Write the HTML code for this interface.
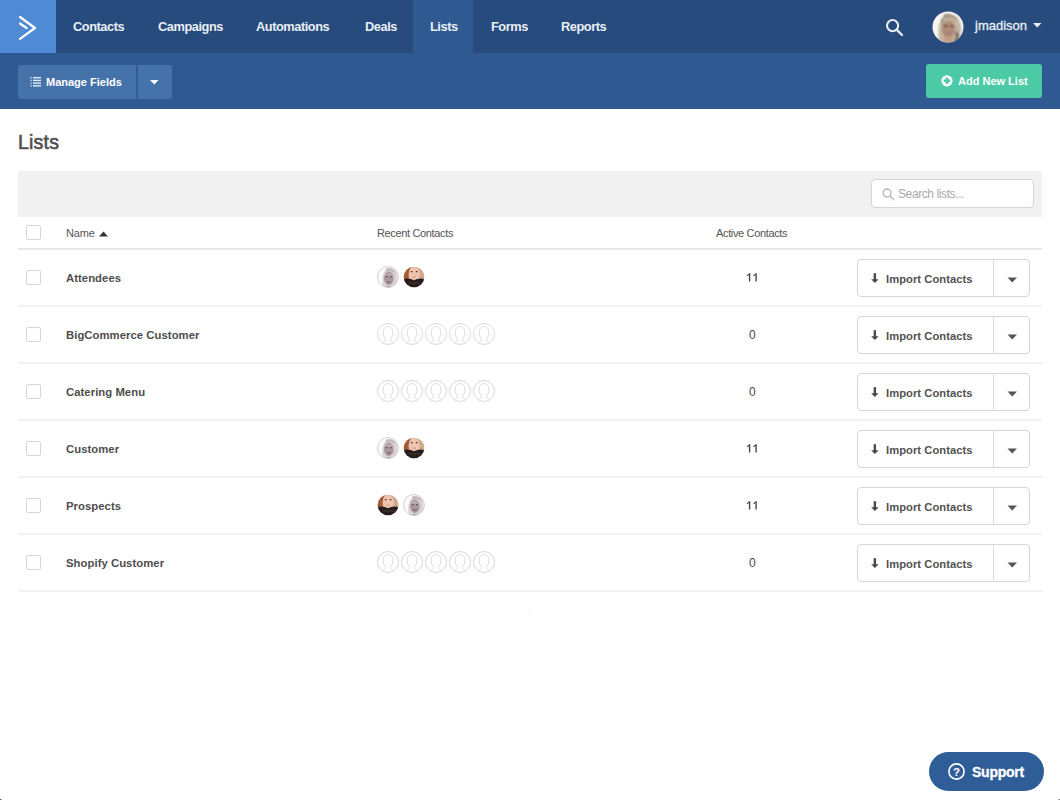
<!DOCTYPE html>
<html><head><meta charset="utf-8">
<style>
*{box-sizing:border-box;margin:0;padding:0}
html,body{width:1060px;height:800px;overflow:hidden;background:#fff;font-family:"Liberation Sans",sans-serif}
.abs{position:absolute}
#nav{position:absolute;left:0;top:0;width:1060px;height:53px;background:#264b7c}
#logo{position:absolute;left:0;top:0;width:56px;height:53px;background:#4f8bd5}
.ni{position:absolute;top:0;height:53px;line-height:54px;color:#e9eef5;font-weight:bold;font-size:12.8px;letter-spacing:-0.45px;white-space:nowrap}
#tab{position:absolute;left:413px;top:0;width:60px;height:53px;background:#2f5a91}
#sub{position:absolute;left:0;top:53px;width:1060px;height:56px;background:#2f5a91}
#mf{position:absolute;left:18px;top:65px;width:154px;height:34px;background:#4672aa;border-radius:3px}
#mfdiv{position:absolute;left:118px;top:0;width:2px;height:34px;background:#345f96}
#add{position:absolute;left:926px;top:64px;width:116px;height:34px;background:#4cc9a5;border-radius:3px}
.btxt{position:absolute;color:#fff;font-weight:bold;font-size:11px;white-space:nowrap}
#title{position:absolute;left:18px;top:131px;font-size:19.5px;color:#505050;-webkit-text-stroke:0.6px #505050;letter-spacing:0.2px}
#gbar{position:absolute;left:18px;top:171px;width:1024px;height:46px;background:#f1f1f1;border-radius:2px 2px 0 0}
#search{position:absolute;left:871px;top:179px;width:163px;height:29px;background:#fff;border:1px solid #d4d4d4;border-radius:4px}
.hdr{position:absolute;top:227px;font-size:11px;color:#555;white-space:nowrap;letter-spacing:-0.35px}
.line{position:absolute;left:18px;width:1024px;height:2px;background:#f2f2f2}
.cb{position:absolute;left:26px;width:15px;height:15px;border:1px solid #d6d6d6;border-radius:2px;background:#fff}
.nm{position:absolute;left:66px;font-size:11.3px;font-weight:bold;color:#4e4e4e;letter-spacing:0.05px;white-space:nowrap}
.num{position:absolute;left:702px;width:100px;text-align:center;font-size:12px;color:#474747;letter-spacing:-0.7px}
.imp{position:absolute;left:857px;width:173px;height:38px;border:1px solid #d6d6d6;border-radius:4px;background:#fff}
.imp .dv{position:absolute;left:135px;top:0;width:1px;height:36px;background:#dcdcdc}
.imp .t{position:absolute;left:28px;top:13px;font-size:11.2px;font-weight:bold;color:#525252;letter-spacing:0.05px;white-space:nowrap}
.imp svg{position:absolute}
.av{position:absolute;width:22px;height:22px;border-radius:50%}
#sup{position:absolute;left:929px;top:752px;width:115px;height:39px;border-radius:20px;background:#2f5d98}
</style></head><body>
<div id="nav">
  <div id="logo">
    <svg width="56" height="53" style="position:absolute;left:0;top:0">
      <path d="M20 17 L35 28 L20 38.8" fill="none" stroke="#fff" stroke-width="2.2" stroke-linecap="round" stroke-linejoin="round"/>
      <path d="M20 23.5 L26.6 28" fill="none" stroke="#fff" stroke-width="2.2" stroke-linecap="round"/>
    </svg>
  </div>
  <div id="tab"></div>
  <div class="ni" style="left:73px">Contacts</div>
  <div class="ni" style="left:158px">Campaigns</div>
  <div class="ni" style="left:256px">Automations</div>
  <div class="ni" style="left:365px">Deals</div>
  <div class="ni" style="left:430px">Lists</div>
  <div class="ni" style="left:491px">Forms</div>
  <div class="ni" style="left:561px">Reports</div>
  <svg class="abs" style="left:884px;top:17px" width="22" height="22">
    <circle cx="8.6" cy="8.6" r="5.6" fill="none" stroke="#e9eef5" stroke-width="2.1"/>
    <path d="M12.6 12.6 L18 18" stroke="#e9eef5" stroke-width="2.3" stroke-linecap="round"/>
  </svg>
  <svg class="abs" style="left:932px;top:11px" width="32" height="32" viewBox="0 0 32 32">
    <defs><clipPath id="uc"><circle cx="16" cy="16" r="15.5"/></clipPath><filter id="bl" x="-20%" y="-20%" width="140%" height="140%"><feGaussianBlur stdDeviation="0.8"/></filter></defs>
    <g clip-path="url(#uc)"><rect width="32" height="32" fill="#f8f6f3"/>
    <g filter="url(#bl)">
    <path d="M8 32 C5 22 6 8 15 4 C24 2 30 10 29 20 C29 26 27 30 25 32 Z" fill="#c4b6a2"/>
    <path d="M12 3.5 C18 2 24 5 27 10 C23 6 17 5 12 6 Z" fill="#8f806e"/>
    <path d="M9 12 C9 7 12 5 14 5 C11 7 10 10 10 14 Z" fill="#6f5f50"/>
    <ellipse cx="16.5" cy="18" rx="6.8" ry="8.8" fill="#b48c76"/>
    <path d="M11 9 C14 7 20 7 24 11 C20 9 14 9 11 11 Z" fill="#bdae98"/>
    <rect x="12" y="14.2" width="3.2" height="1.8" fill="#33241f"/><rect x="18" y="14.2" width="3.2" height="1.8" fill="#33241f"/>
    <path d="M12.5 20.5 C14.5 23.5 18.5 23.5 20.5 20.5 Z" fill="#4a2824"/>
    <path d="M13.5 20.8 C15 21.8 18 21.8 19.5 20.8" stroke="#efe6e0" stroke-width="0.9" fill="none"/>
    <path d="M24.5 21 C26 25 25 29 22.5 32" stroke="#4a3a2e" stroke-width="2.2" fill="none"/>
    <rect x="12" y="26" width="9" height="6" fill="#c39d86"/>
    </g></g>
  </svg>
  <div class="abs" style="left:975px;top:0;height:53px;line-height:51px;font-size:13px;color:#e9eef5;-webkit-text-stroke:0.3px #e9eef5;white-space:nowrap">jmadison</div>
  <svg class="abs" style="left:1033px;top:23px" width="9" height="5"><path d="M0 0 L8.5 0 L4.25 4.5 Z" fill="#e9eef5"/></svg>
</div>
<div id="sub">
</div>
<div id="mf">
  <svg class="abs" style="left:12px;top:12px" width="12" height="10">
    <g fill="#e3eaf3"><rect x="0.5" y="0" width="1.2" height="1.3"/><rect x="3" y="0" width="8" height="1.4"/>
    <rect x="0.5" y="2.7" width="1.2" height="1.3"/><rect x="3" y="2.7" width="8" height="1.4"/>
    <rect x="0.5" y="5.4" width="1.2" height="1.3"/><rect x="3" y="5.4" width="8" height="1.4"/>
    <rect x="0.5" y="8.1" width="1.2" height="1.3"/><rect x="3" y="8.1" width="8" height="1.4"/></g>
  </svg>
  <div class="btxt" style="left:28px;top:11px">Manage Fields</div>
  <div id="mfdiv"></div>
  <svg class="abs" style="left:132px;top:15px" width="9" height="5"><path d="M0 0 L8.5 0 L4.25 4.5 Z" fill="#fff"/></svg>
</div>
<div id="add">
  <svg class="abs" style="left:15px;top:11px" width="13" height="13">
    <circle cx="6" cy="5.8" r="5.6" fill="#fff"/>
    <path d="M6 2.6 V9 M2.8 5.8 H9.2" stroke="#4cc8a4" stroke-width="2.5"/>
  </svg>
  <div class="btxt" style="left:32px;top:11px">Add New List</div>
</div>

<div id="title">Lists</div>
<div id="gbar"></div>
<div id="search">
  <svg class="abs" style="left:10px;top:8px" width="13" height="13">
    <circle cx="5" cy="5" r="4" fill="none" stroke="#b5b5b5" stroke-width="1.3"/>
    <path d="M8 8 L11.5 11.5" stroke="#b5b5b5" stroke-width="1.4" stroke-linecap="round"/>
  </svg>
  <div class="abs" style="left:26px;top:7px;font-size:12px;color:#a9a9a9;letter-spacing:-0.4px;white-space:nowrap">Search lists...</div>
</div>

<div class="cb" style="top:225px"></div>
<div class="hdr" style="left:66px;letter-spacing:-0.15px">Name</div>
<svg class="abs" style="left:99px;top:231px" width="10" height="6"><path d="M0 5.5 L9 5.5 L4.5 0.5 Z" fill="#333"/></svg>
<div class="hdr" style="left:377px">Recent Contacts</div>
<div class="hdr" style="left:716px">Active Contacts</div>
<div class="line" style="top:248px;height:2px;background:#e7e7e7"></div>

<!--ROWS-->
<svg width="0" height="0" style="position:absolute"><filter id="sb" x="-20%" y="-20%" width="140%" height="140%"><feGaussianBlur stdDeviation="0.55"/></filter></svg>
<div class="cb" style="top:270px"></div>
<div class="nm" style="top:272px">Attendees</div>
<svg class="abs" style="left:377px;top:266px" width="22" height="22" viewBox="0 0 22 22"><defs><clipPath id="ca0"><circle cx="11" cy="11" r="10.5"/></clipPath></defs><g clip-path="url(#ca0)"><rect width="22" height="22" fill="#fafafa"/><g filter="url(#sb)"><path d="M6 22 C4.5 14 5 5 11 2.5 C17 1.5 20.5 6 20.5 12 C20.5 17 19.5 20 18 22 Z" fill="#d8d2d0"/><path d="M9 2.8 C13 1.5 18 3 19.5 8 C16 5 12 4.5 9 5.5 Z" fill="#c4bcbc"/><ellipse cx="11.8" cy="12.2" rx="4.8" ry="6.8" fill="#a8969a"/><ellipse cx="12" cy="9" rx="3.6" ry="2.2" fill="#b9a9aa"/><rect x="9" y="10" width="1.8" height="1.2" fill="#5a4a66"/><rect x="12.8" y="10" width="1.8" height="1.2" fill="#5a4a66"/><path d="M10 15.5 C11.2 16.4 12.6 16.4 13.8 15.5" stroke="#6e5a6a" stroke-width="1" fill="none"/><path d="M8 22 C9 19.5 15 19.5 16 22Z" fill="#8f7f86"/></g></g><circle cx="11" cy="11" r="10.5" fill="none" stroke="#d3d3d3" stroke-width="1"/></svg>
<svg class="abs" style="left:403px;top:266px" width="22" height="22" viewBox="0 0 22 22"><defs><clipPath id="cb0"><circle cx="11" cy="11" r="10.3"/></clipPath></defs><g clip-path="url(#cb0)"><rect width="22" height="22" fill="#d6b49a"/><g filter="url(#sb)"><path d="M0 0 H9 C6 3 5 8 6 14 L0 16 Z" fill="#a55a36"/><path d="M22 0 H14 C17 3 18 8 17 14 L22 16 Z" fill="#d0aa88"/><ellipse cx="11.2" cy="7.8" rx="5.4" ry="6.6" fill="#efc5b1"/><rect x="7.8" y="5" width="1.8" height="1.3" fill="#5e3f3c"/><rect x="12.8" y="5" width="1.8" height="1.3" fill="#5e3f3c"/><path d="M9.5 10.8 C10.5 11.4 12 11.4 13 10.8" stroke="#c48a80" stroke-width="0.9" fill="none"/><path d="M0 22 V13.5 C3.5 11.5 7 12.5 11 14.2 C15 12.5 18.5 11.5 22 13.5 V22 Z" fill="#261e1c"/><path d="M6 17 C8 16 10 18 12 17 C14 16 16 18 18 17" stroke="#4a3a34" stroke-width="1" fill="none"/></g></g></svg>
<svg class="abs" style="left:746px;top:272px" width="12" height="11"><path d="M3.6 1.7 V9.6 M10.1 1.7 V9.6" stroke="#454545" stroke-width="1.35"/><path d="M1 3.9 L3.9 1.4 M7.5 3.9 L10.4 1.4" stroke="#454545" stroke-width="1.2"/></svg>
<div class="imp" style="top:259px"><svg style="left:12px;top:13px" width="10" height="11"><path d="M4.85 0.2 V7" stroke="#484848" stroke-width="2.4"/><path d="M1.1 6.2 L8.6 6.2 L4.85 10.1 Z" fill="#484848"/></svg><div class="t">Import Contacts</div><div class="dv"></div><svg style="left:149px;top:17px" width="11" height="6"><path d="M0.5 0.5 L10 0.5 L5.25 5.5 Z" fill="#555"/></svg></div>
<div class="line" style="top:305px"></div>
<div class="cb" style="top:327px"></div>
<div class="nm" style="top:329px">BigCommerce Customer</div>
<svg class="abs" style="left:377px;top:323px" width="22" height="22"><circle cx="11" cy="11" r="10.5" fill="#fff" stroke="#d9d9d9" stroke-width="1"/><path d="M5.2 19.6 C6.8 18.4 8.6 17.8 8.8 16.6 C7 14.6 6.1 12 6.1 8.8 C6.1 5.6 8.1 3.6 11 3.6 C13.9 3.6 15.9 5.6 15.9 8.8 C15.9 12 15 14.6 13.2 16.6 C13.4 17.8 15.2 18.4 16.8 19.6" fill="none" stroke="#dadada" stroke-width="0.9"/></svg>
<svg class="abs" style="left:401px;top:323px" width="22" height="22"><circle cx="11" cy="11" r="10.5" fill="#fff" stroke="#d9d9d9" stroke-width="1"/><path d="M5.2 19.6 C6.8 18.4 8.6 17.8 8.8 16.6 C7 14.6 6.1 12 6.1 8.8 C6.1 5.6 8.1 3.6 11 3.6 C13.9 3.6 15.9 5.6 15.9 8.8 C15.9 12 15 14.6 13.2 16.6 C13.4 17.8 15.2 18.4 16.8 19.6" fill="none" stroke="#dadada" stroke-width="0.9"/></svg>
<svg class="abs" style="left:425px;top:323px" width="22" height="22"><circle cx="11" cy="11" r="10.5" fill="#fff" stroke="#d9d9d9" stroke-width="1"/><path d="M5.2 19.6 C6.8 18.4 8.6 17.8 8.8 16.6 C7 14.6 6.1 12 6.1 8.8 C6.1 5.6 8.1 3.6 11 3.6 C13.9 3.6 15.9 5.6 15.9 8.8 C15.9 12 15 14.6 13.2 16.6 C13.4 17.8 15.2 18.4 16.8 19.6" fill="none" stroke="#dadada" stroke-width="0.9"/></svg>
<svg class="abs" style="left:449px;top:323px" width="22" height="22"><circle cx="11" cy="11" r="10.5" fill="#fff" stroke="#d9d9d9" stroke-width="1"/><path d="M5.2 19.6 C6.8 18.4 8.6 17.8 8.8 16.6 C7 14.6 6.1 12 6.1 8.8 C6.1 5.6 8.1 3.6 11 3.6 C13.9 3.6 15.9 5.6 15.9 8.8 C15.9 12 15 14.6 13.2 16.6 C13.4 17.8 15.2 18.4 16.8 19.6" fill="none" stroke="#dadada" stroke-width="0.9"/></svg>
<svg class="abs" style="left:473px;top:323px" width="22" height="22"><circle cx="11" cy="11" r="10.5" fill="#fff" stroke="#d9d9d9" stroke-width="1"/><path d="M5.2 19.6 C6.8 18.4 8.6 17.8 8.8 16.6 C7 14.6 6.1 12 6.1 8.8 C6.1 5.6 8.1 3.6 11 3.6 C13.9 3.6 15.9 5.6 15.9 8.8 C15.9 12 15 14.6 13.2 16.6 C13.4 17.8 15.2 18.4 16.8 19.6" fill="none" stroke="#dadada" stroke-width="0.9"/></svg>
<div class="num" style="top:328px">0</div>
<div class="imp" style="top:316px"><svg style="left:12px;top:13px" width="10" height="11"><path d="M4.85 0.2 V7" stroke="#484848" stroke-width="2.4"/><path d="M1.1 6.2 L8.6 6.2 L4.85 10.1 Z" fill="#484848"/></svg><div class="t">Import Contacts</div><div class="dv"></div><svg style="left:149px;top:17px" width="11" height="6"><path d="M0.5 0.5 L10 0.5 L5.25 5.5 Z" fill="#555"/></svg></div>
<div class="line" style="top:362px"></div>
<div class="cb" style="top:384px"></div>
<div class="nm" style="top:386px">Catering Menu</div>
<svg class="abs" style="left:377px;top:380px" width="22" height="22"><circle cx="11" cy="11" r="10.5" fill="#fff" stroke="#d9d9d9" stroke-width="1"/><path d="M5.2 19.6 C6.8 18.4 8.6 17.8 8.8 16.6 C7 14.6 6.1 12 6.1 8.8 C6.1 5.6 8.1 3.6 11 3.6 C13.9 3.6 15.9 5.6 15.9 8.8 C15.9 12 15 14.6 13.2 16.6 C13.4 17.8 15.2 18.4 16.8 19.6" fill="none" stroke="#dadada" stroke-width="0.9"/></svg>
<svg class="abs" style="left:401px;top:380px" width="22" height="22"><circle cx="11" cy="11" r="10.5" fill="#fff" stroke="#d9d9d9" stroke-width="1"/><path d="M5.2 19.6 C6.8 18.4 8.6 17.8 8.8 16.6 C7 14.6 6.1 12 6.1 8.8 C6.1 5.6 8.1 3.6 11 3.6 C13.9 3.6 15.9 5.6 15.9 8.8 C15.9 12 15 14.6 13.2 16.6 C13.4 17.8 15.2 18.4 16.8 19.6" fill="none" stroke="#dadada" stroke-width="0.9"/></svg>
<svg class="abs" style="left:425px;top:380px" width="22" height="22"><circle cx="11" cy="11" r="10.5" fill="#fff" stroke="#d9d9d9" stroke-width="1"/><path d="M5.2 19.6 C6.8 18.4 8.6 17.8 8.8 16.6 C7 14.6 6.1 12 6.1 8.8 C6.1 5.6 8.1 3.6 11 3.6 C13.9 3.6 15.9 5.6 15.9 8.8 C15.9 12 15 14.6 13.2 16.6 C13.4 17.8 15.2 18.4 16.8 19.6" fill="none" stroke="#dadada" stroke-width="0.9"/></svg>
<svg class="abs" style="left:449px;top:380px" width="22" height="22"><circle cx="11" cy="11" r="10.5" fill="#fff" stroke="#d9d9d9" stroke-width="1"/><path d="M5.2 19.6 C6.8 18.4 8.6 17.8 8.8 16.6 C7 14.6 6.1 12 6.1 8.8 C6.1 5.6 8.1 3.6 11 3.6 C13.9 3.6 15.9 5.6 15.9 8.8 C15.9 12 15 14.6 13.2 16.6 C13.4 17.8 15.2 18.4 16.8 19.6" fill="none" stroke="#dadada" stroke-width="0.9"/></svg>
<svg class="abs" style="left:473px;top:380px" width="22" height="22"><circle cx="11" cy="11" r="10.5" fill="#fff" stroke="#d9d9d9" stroke-width="1"/><path d="M5.2 19.6 C6.8 18.4 8.6 17.8 8.8 16.6 C7 14.6 6.1 12 6.1 8.8 C6.1 5.6 8.1 3.6 11 3.6 C13.9 3.6 15.9 5.6 15.9 8.8 C15.9 12 15 14.6 13.2 16.6 C13.4 17.8 15.2 18.4 16.8 19.6" fill="none" stroke="#dadada" stroke-width="0.9"/></svg>
<div class="num" style="top:385px">0</div>
<div class="imp" style="top:373px"><svg style="left:12px;top:13px" width="10" height="11"><path d="M4.85 0.2 V7" stroke="#484848" stroke-width="2.4"/><path d="M1.1 6.2 L8.6 6.2 L4.85 10.1 Z" fill="#484848"/></svg><div class="t">Import Contacts</div><div class="dv"></div><svg style="left:149px;top:17px" width="11" height="6"><path d="M0.5 0.5 L10 0.5 L5.25 5.5 Z" fill="#555"/></svg></div>
<div class="line" style="top:419px"></div>
<div class="cb" style="top:441px"></div>
<div class="nm" style="top:443px">Customer</div>
<svg class="abs" style="left:377px;top:437px" width="22" height="22" viewBox="0 0 22 22"><defs><clipPath id="ca1"><circle cx="11" cy="11" r="10.5"/></clipPath></defs><g clip-path="url(#ca1)"><rect width="22" height="22" fill="#fafafa"/><g filter="url(#sb)"><path d="M6 22 C4.5 14 5 5 11 2.5 C17 1.5 20.5 6 20.5 12 C20.5 17 19.5 20 18 22 Z" fill="#d8d2d0"/><path d="M9 2.8 C13 1.5 18 3 19.5 8 C16 5 12 4.5 9 5.5 Z" fill="#c4bcbc"/><ellipse cx="11.8" cy="12.2" rx="4.8" ry="6.8" fill="#a8969a"/><ellipse cx="12" cy="9" rx="3.6" ry="2.2" fill="#b9a9aa"/><rect x="9" y="10" width="1.8" height="1.2" fill="#5a4a66"/><rect x="12.8" y="10" width="1.8" height="1.2" fill="#5a4a66"/><path d="M10 15.5 C11.2 16.4 12.6 16.4 13.8 15.5" stroke="#6e5a6a" stroke-width="1" fill="none"/><path d="M8 22 C9 19.5 15 19.5 16 22Z" fill="#8f7f86"/></g></g><circle cx="11" cy="11" r="10.5" fill="none" stroke="#d3d3d3" stroke-width="1"/></svg>
<svg class="abs" style="left:403px;top:437px" width="22" height="22" viewBox="0 0 22 22"><defs><clipPath id="cb1"><circle cx="11" cy="11" r="10.3"/></clipPath></defs><g clip-path="url(#cb1)"><rect width="22" height="22" fill="#d6b49a"/><g filter="url(#sb)"><path d="M0 0 H9 C6 3 5 8 6 14 L0 16 Z" fill="#a55a36"/><path d="M22 0 H14 C17 3 18 8 17 14 L22 16 Z" fill="#d0aa88"/><ellipse cx="11.2" cy="7.8" rx="5.4" ry="6.6" fill="#efc5b1"/><rect x="7.8" y="5" width="1.8" height="1.3" fill="#5e3f3c"/><rect x="12.8" y="5" width="1.8" height="1.3" fill="#5e3f3c"/><path d="M9.5 10.8 C10.5 11.4 12 11.4 13 10.8" stroke="#c48a80" stroke-width="0.9" fill="none"/><path d="M0 22 V13.5 C3.5 11.5 7 12.5 11 14.2 C15 12.5 18.5 11.5 22 13.5 V22 Z" fill="#261e1c"/><path d="M6 17 C8 16 10 18 12 17 C14 16 16 18 18 17" stroke="#4a3a34" stroke-width="1" fill="none"/></g></g></svg>
<svg class="abs" style="left:746px;top:443px" width="12" height="11"><path d="M3.6 1.7 V9.6 M10.1 1.7 V9.6" stroke="#454545" stroke-width="1.35"/><path d="M1 3.9 L3.9 1.4 M7.5 3.9 L10.4 1.4" stroke="#454545" stroke-width="1.2"/></svg>
<div class="imp" style="top:430px"><svg style="left:12px;top:13px" width="10" height="11"><path d="M4.85 0.2 V7" stroke="#484848" stroke-width="2.4"/><path d="M1.1 6.2 L8.6 6.2 L4.85 10.1 Z" fill="#484848"/></svg><div class="t">Import Contacts</div><div class="dv"></div><svg style="left:149px;top:17px" width="11" height="6"><path d="M0.5 0.5 L10 0.5 L5.25 5.5 Z" fill="#555"/></svg></div>
<div class="line" style="top:476px"></div>
<div class="cb" style="top:498px"></div>
<div class="nm" style="top:500px">Prospects</div>
<svg class="abs" style="left:377px;top:494px" width="22" height="22" viewBox="0 0 22 22"><defs><clipPath id="cb2"><circle cx="11" cy="11" r="10.3"/></clipPath></defs><g clip-path="url(#cb2)"><rect width="22" height="22" fill="#d6b49a"/><g filter="url(#sb)"><path d="M0 0 H9 C6 3 5 8 6 14 L0 16 Z" fill="#a55a36"/><path d="M22 0 H14 C17 3 18 8 17 14 L22 16 Z" fill="#d0aa88"/><ellipse cx="11.2" cy="7.8" rx="5.4" ry="6.6" fill="#efc5b1"/><rect x="7.8" y="5" width="1.8" height="1.3" fill="#5e3f3c"/><rect x="12.8" y="5" width="1.8" height="1.3" fill="#5e3f3c"/><path d="M9.5 10.8 C10.5 11.4 12 11.4 13 10.8" stroke="#c48a80" stroke-width="0.9" fill="none"/><path d="M0 22 V13.5 C3.5 11.5 7 12.5 11 14.2 C15 12.5 18.5 11.5 22 13.5 V22 Z" fill="#261e1c"/><path d="M6 17 C8 16 10 18 12 17 C14 16 16 18 18 17" stroke="#4a3a34" stroke-width="1" fill="none"/></g></g></svg>
<svg class="abs" style="left:403px;top:494px" width="22" height="22" viewBox="0 0 22 22"><defs><clipPath id="ca2"><circle cx="11" cy="11" r="10.5"/></clipPath></defs><g clip-path="url(#ca2)"><rect width="22" height="22" fill="#fafafa"/><g filter="url(#sb)"><path d="M6 22 C4.5 14 5 5 11 2.5 C17 1.5 20.5 6 20.5 12 C20.5 17 19.5 20 18 22 Z" fill="#d8d2d0"/><path d="M9 2.8 C13 1.5 18 3 19.5 8 C16 5 12 4.5 9 5.5 Z" fill="#c4bcbc"/><ellipse cx="11.8" cy="12.2" rx="4.8" ry="6.8" fill="#a8969a"/><ellipse cx="12" cy="9" rx="3.6" ry="2.2" fill="#b9a9aa"/><rect x="9" y="10" width="1.8" height="1.2" fill="#5a4a66"/><rect x="12.8" y="10" width="1.8" height="1.2" fill="#5a4a66"/><path d="M10 15.5 C11.2 16.4 12.6 16.4 13.8 15.5" stroke="#6e5a6a" stroke-width="1" fill="none"/><path d="M8 22 C9 19.5 15 19.5 16 22Z" fill="#8f7f86"/></g></g><circle cx="11" cy="11" r="10.5" fill="none" stroke="#d3d3d3" stroke-width="1"/></svg>
<svg class="abs" style="left:746px;top:500px" width="12" height="11"><path d="M3.6 1.7 V9.6 M10.1 1.7 V9.6" stroke="#454545" stroke-width="1.35"/><path d="M1 3.9 L3.9 1.4 M7.5 3.9 L10.4 1.4" stroke="#454545" stroke-width="1.2"/></svg>
<div class="imp" style="top:487px"><svg style="left:12px;top:13px" width="10" height="11"><path d="M4.85 0.2 V7" stroke="#484848" stroke-width="2.4"/><path d="M1.1 6.2 L8.6 6.2 L4.85 10.1 Z" fill="#484848"/></svg><div class="t">Import Contacts</div><div class="dv"></div><svg style="left:149px;top:17px" width="11" height="6"><path d="M0.5 0.5 L10 0.5 L5.25 5.5 Z" fill="#555"/></svg></div>
<div class="line" style="top:533px"></div>
<div class="cb" style="top:555px"></div>
<div class="nm" style="top:557px">Shopify Customer</div>
<svg class="abs" style="left:377px;top:551px" width="22" height="22"><circle cx="11" cy="11" r="10.5" fill="#fff" stroke="#d9d9d9" stroke-width="1"/><path d="M5.2 19.6 C6.8 18.4 8.6 17.8 8.8 16.6 C7 14.6 6.1 12 6.1 8.8 C6.1 5.6 8.1 3.6 11 3.6 C13.9 3.6 15.9 5.6 15.9 8.8 C15.9 12 15 14.6 13.2 16.6 C13.4 17.8 15.2 18.4 16.8 19.6" fill="none" stroke="#dadada" stroke-width="0.9"/></svg>
<svg class="abs" style="left:401px;top:551px" width="22" height="22"><circle cx="11" cy="11" r="10.5" fill="#fff" stroke="#d9d9d9" stroke-width="1"/><path d="M5.2 19.6 C6.8 18.4 8.6 17.8 8.8 16.6 C7 14.6 6.1 12 6.1 8.8 C6.1 5.6 8.1 3.6 11 3.6 C13.9 3.6 15.9 5.6 15.9 8.8 C15.9 12 15 14.6 13.2 16.6 C13.4 17.8 15.2 18.4 16.8 19.6" fill="none" stroke="#dadada" stroke-width="0.9"/></svg>
<svg class="abs" style="left:425px;top:551px" width="22" height="22"><circle cx="11" cy="11" r="10.5" fill="#fff" stroke="#d9d9d9" stroke-width="1"/><path d="M5.2 19.6 C6.8 18.4 8.6 17.8 8.8 16.6 C7 14.6 6.1 12 6.1 8.8 C6.1 5.6 8.1 3.6 11 3.6 C13.9 3.6 15.9 5.6 15.9 8.8 C15.9 12 15 14.6 13.2 16.6 C13.4 17.8 15.2 18.4 16.8 19.6" fill="none" stroke="#dadada" stroke-width="0.9"/></svg>
<svg class="abs" style="left:449px;top:551px" width="22" height="22"><circle cx="11" cy="11" r="10.5" fill="#fff" stroke="#d9d9d9" stroke-width="1"/><path d="M5.2 19.6 C6.8 18.4 8.6 17.8 8.8 16.6 C7 14.6 6.1 12 6.1 8.8 C6.1 5.6 8.1 3.6 11 3.6 C13.9 3.6 15.9 5.6 15.9 8.8 C15.9 12 15 14.6 13.2 16.6 C13.4 17.8 15.2 18.4 16.8 19.6" fill="none" stroke="#dadada" stroke-width="0.9"/></svg>
<svg class="abs" style="left:473px;top:551px" width="22" height="22"><circle cx="11" cy="11" r="10.5" fill="#fff" stroke="#d9d9d9" stroke-width="1"/><path d="M5.2 19.6 C6.8 18.4 8.6 17.8 8.8 16.6 C7 14.6 6.1 12 6.1 8.8 C6.1 5.6 8.1 3.6 11 3.6 C13.9 3.6 15.9 5.6 15.9 8.8 C15.9 12 15 14.6 13.2 16.6 C13.4 17.8 15.2 18.4 16.8 19.6" fill="none" stroke="#dadada" stroke-width="0.9"/></svg>
<div class="num" style="top:556px">0</div>
<div class="imp" style="top:544px"><svg style="left:12px;top:13px" width="10" height="11"><path d="M4.85 0.2 V7" stroke="#484848" stroke-width="2.4"/><path d="M1.1 6.2 L8.6 6.2 L4.85 10.1 Z" fill="#484848"/></svg><div class="t">Import Contacts</div><div class="dv"></div><svg style="left:149px;top:17px" width="11" height="6"><path d="M0.5 0.5 L10 0.5 L5.25 5.5 Z" fill="#555"/></svg></div>
<div class="line" style="top:590px"></div>
<!--/ROWS-->

<div id="sup">
  <svg class="abs" style="left:19px;top:11px" width="18" height="18">
    <circle cx="8.5" cy="8.5" r="7.6" fill="none" stroke="#fff" stroke-width="1.6"/>
    <text x="8.6" y="12.6" text-anchor="middle" font-family="Liberation Sans" font-weight="bold" font-size="11.5" fill="#fff">?</text>
  </svg>
  <div class="abs" style="left:43px;top:12px;font-size:14px;font-weight:bold;color:#fff;-webkit-text-stroke:0.3px #fff;letter-spacing:-0.25px">Support</div>
</div>
<div class="abs" style="left:530px;top:612px;width:1px;height:1px;background:#cfcfcf"></div>
<div class="abs" style="left:0;top:799px;width:1px;height:1px;background:#5a5a5a"></div><div class="abs" style="left:1px;top:799px;width:1px;height:1px;background:#b8b0ac"></div>
<div class="abs" style="left:1059px;top:799px;width:1px;height:1px;background:#6a625e"></div><div class="abs" style="left:1058px;top:799px;width:1px;height:1px;background:#c8c0bc"></div>
</body></html>
